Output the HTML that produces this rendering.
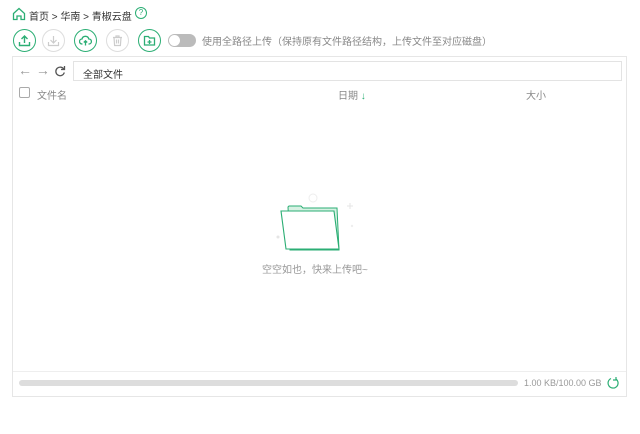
<!DOCTYPE html>
<html><head><meta charset="utf-8"><style>
*{margin:0;padding:0;box-sizing:border-box}
body{width:640px;height:434px;background:#fff;font-family:"Liberation Sans","Noto Sans CJK SC",sans-serif;font-size:10px;color:#555;position:relative;overflow:hidden}
.a{position:absolute;white-space:nowrap}
.c{position:absolute;width:23px;height:23px;border-radius:50%;border:1.5px solid #2bae74;top:29px}
.c.d{border-color:#ddd}
.c svg{position:absolute;left:4px;top:4px}
</style></head><body>
<svg class="a" style="left:12px;top:7px" width="14" height="14" viewBox="0 0 14 14" fill="none" stroke="#2bae74" stroke-width="1.3"><path d="M1.5 6.5L7 1.5l5.5 5V12.5H9V9H5v3.5H1.5z"/></svg>
<div class="a" style="left:29px;top:8px;color:#333">首页 &gt; 华南 &gt; 青椒云盘</div>
<div class="a" style="left:135px;top:7px;width:12px;height:12px;border:1.2px solid #2bae74;border-radius:50%;color:#2bae74;font-size:8px;text-align:center;line-height:10px">?</div>
<div class="c" style="left:13px"><svg width="13" height="13" viewBox="0 0 13 13" fill="none" stroke="#2bae74" stroke-width="1.4"><path d="M6.5 9V2M3.5 5l3-3 3 3M1.5 8v3.5h10V8"/></svg></div>
<div class="c d" style="left:42px"><svg width="13" height="13" viewBox="0 0 13 13" fill="none" stroke="#ccc" stroke-width="1.2"><path d="M6.5 2v7M3.5 6l3 3 3-3M1.5 8v3.5h10V8"/></svg></div>
<div class="c" style="left:74px"><svg width="13" height="13" viewBox="0 0 13 13" fill="none" stroke="#2bae74" stroke-width="1.3"><path d="M3.5 10H3a2.5 2.5 0 010-5 3.5 3.5 0 016.8 0 2.5 2.5 0 01.2 5h-.5M6.5 11.5V7M4.8 8.5l1.7-1.7 1.7 1.7"/></svg></div>
<div class="c d" style="left:106px"><svg width="13" height="13" viewBox="0 0 13 13" fill="none" stroke="#ccc" stroke-width="1.2"><path d="M2 3.5h9M5 3.5V2h3v1.5M3 3.5l.6 8h5.8l.6-8M5.5 5.5v4M7.5 5.5v4"/></svg></div>
<div class="c" style="left:138px"><svg width="13" height="13" viewBox="0 0 13 13" fill="none" stroke="#2bae74" stroke-width="1.3"><path d="M1.5 2.5h4l1 1.5h5v7h-10zM6.5 6v4M4.5 8h4"/></svg></div>
<div class="a" style="left:168px;top:34px;width:28px;height:13px;border-radius:7px;background:#bbb"></div>
<div class="a" style="left:169px;top:35px;width:11px;height:11px;border-radius:50%;background:#fff"></div>
<div class="a" style="left:202px;top:33px;color:#888">使用全路径上传（保持原有文件路径结构，上传文件至对应磁盘）</div>
<div class="a" style="left:12px;top:56px;width:615px;height:341px;border:1px solid #e6e6e6"></div>
<div class="a" style="left:18px;top:63px;color:#999;font-size:14px;line-height:14px">←&nbsp;→</div>
<svg class="a" style="left:54px;top:65px" width="12" height="12" viewBox="0 0 12 12" fill="none" stroke="#555" stroke-width="1.3"><path d="M10 4.5A4.3 4.3 0 1 0 10.3 7.5M10.5 1v3.5H7"/></svg>
<div class="a" style="left:73px;top:61px;width:549px;height:20px;border:1px solid #e3e3e3;padding:4px 9px;color:#333">全部文件</div>
<div class="a" style="left:19px;top:87px;width:11px;height:11px;border:1px solid #aaa;border-radius:2px"></div>
<div class="a" style="left:37px;top:87px;color:#888">文件名</div>
<div class="a" style="left:338px;top:87px;color:#888">日期 <span style="color:#2bae74;font-weight:bold">↓</span></div>
<div class="a" style="left:526px;top:87px;color:#888">大小</div>
<svg class="a" style="left:270px;top:190px" width="90" height="62" viewBox="0 0 90 62" fill="none">
<circle cx="43" cy="8" r="4" stroke="#eee"/>
<path d="M80 13v6M77 16h6" stroke="#e5e5e5"/>
<circle cx="8" cy="47" r="1.5" fill="#e5e5e5"/>
<circle cx="82" cy="36" r="1.2" fill="#eee"/>
<path d="M18 17l1-1h12l2 2h34l2 42H20z" fill="#d7f1e3" stroke="#2bae74"/>
<path d="M11 21h53l5 38H16z" fill="#fff" stroke="#2bae74" stroke-width="1.1"/>
</svg>
<div class="a" style="left:262px;top:261px;color:#999">空空如也，快来上传吧~</div>
<div class="a" style="left:13px;top:371px;width:613px;border-top:1px solid #eee"></div>
<div class="a" style="left:19px;top:380px;width:499px;height:6px;border-radius:3px;background:#ddd"></div>
<div class="a" style="left:524px;top:378px;color:#999;font-size:9px">1.00 KB/100.00 GB</div>
<svg class="a" style="left:606px;top:376px" width="14" height="14" viewBox="0 0 14 14" fill="none" stroke="#2bae74" stroke-width="1.2"><path d="M5 2.5A5 5 0 1 0 10 3M10 1v3h-3"/></svg>
</body></html>
